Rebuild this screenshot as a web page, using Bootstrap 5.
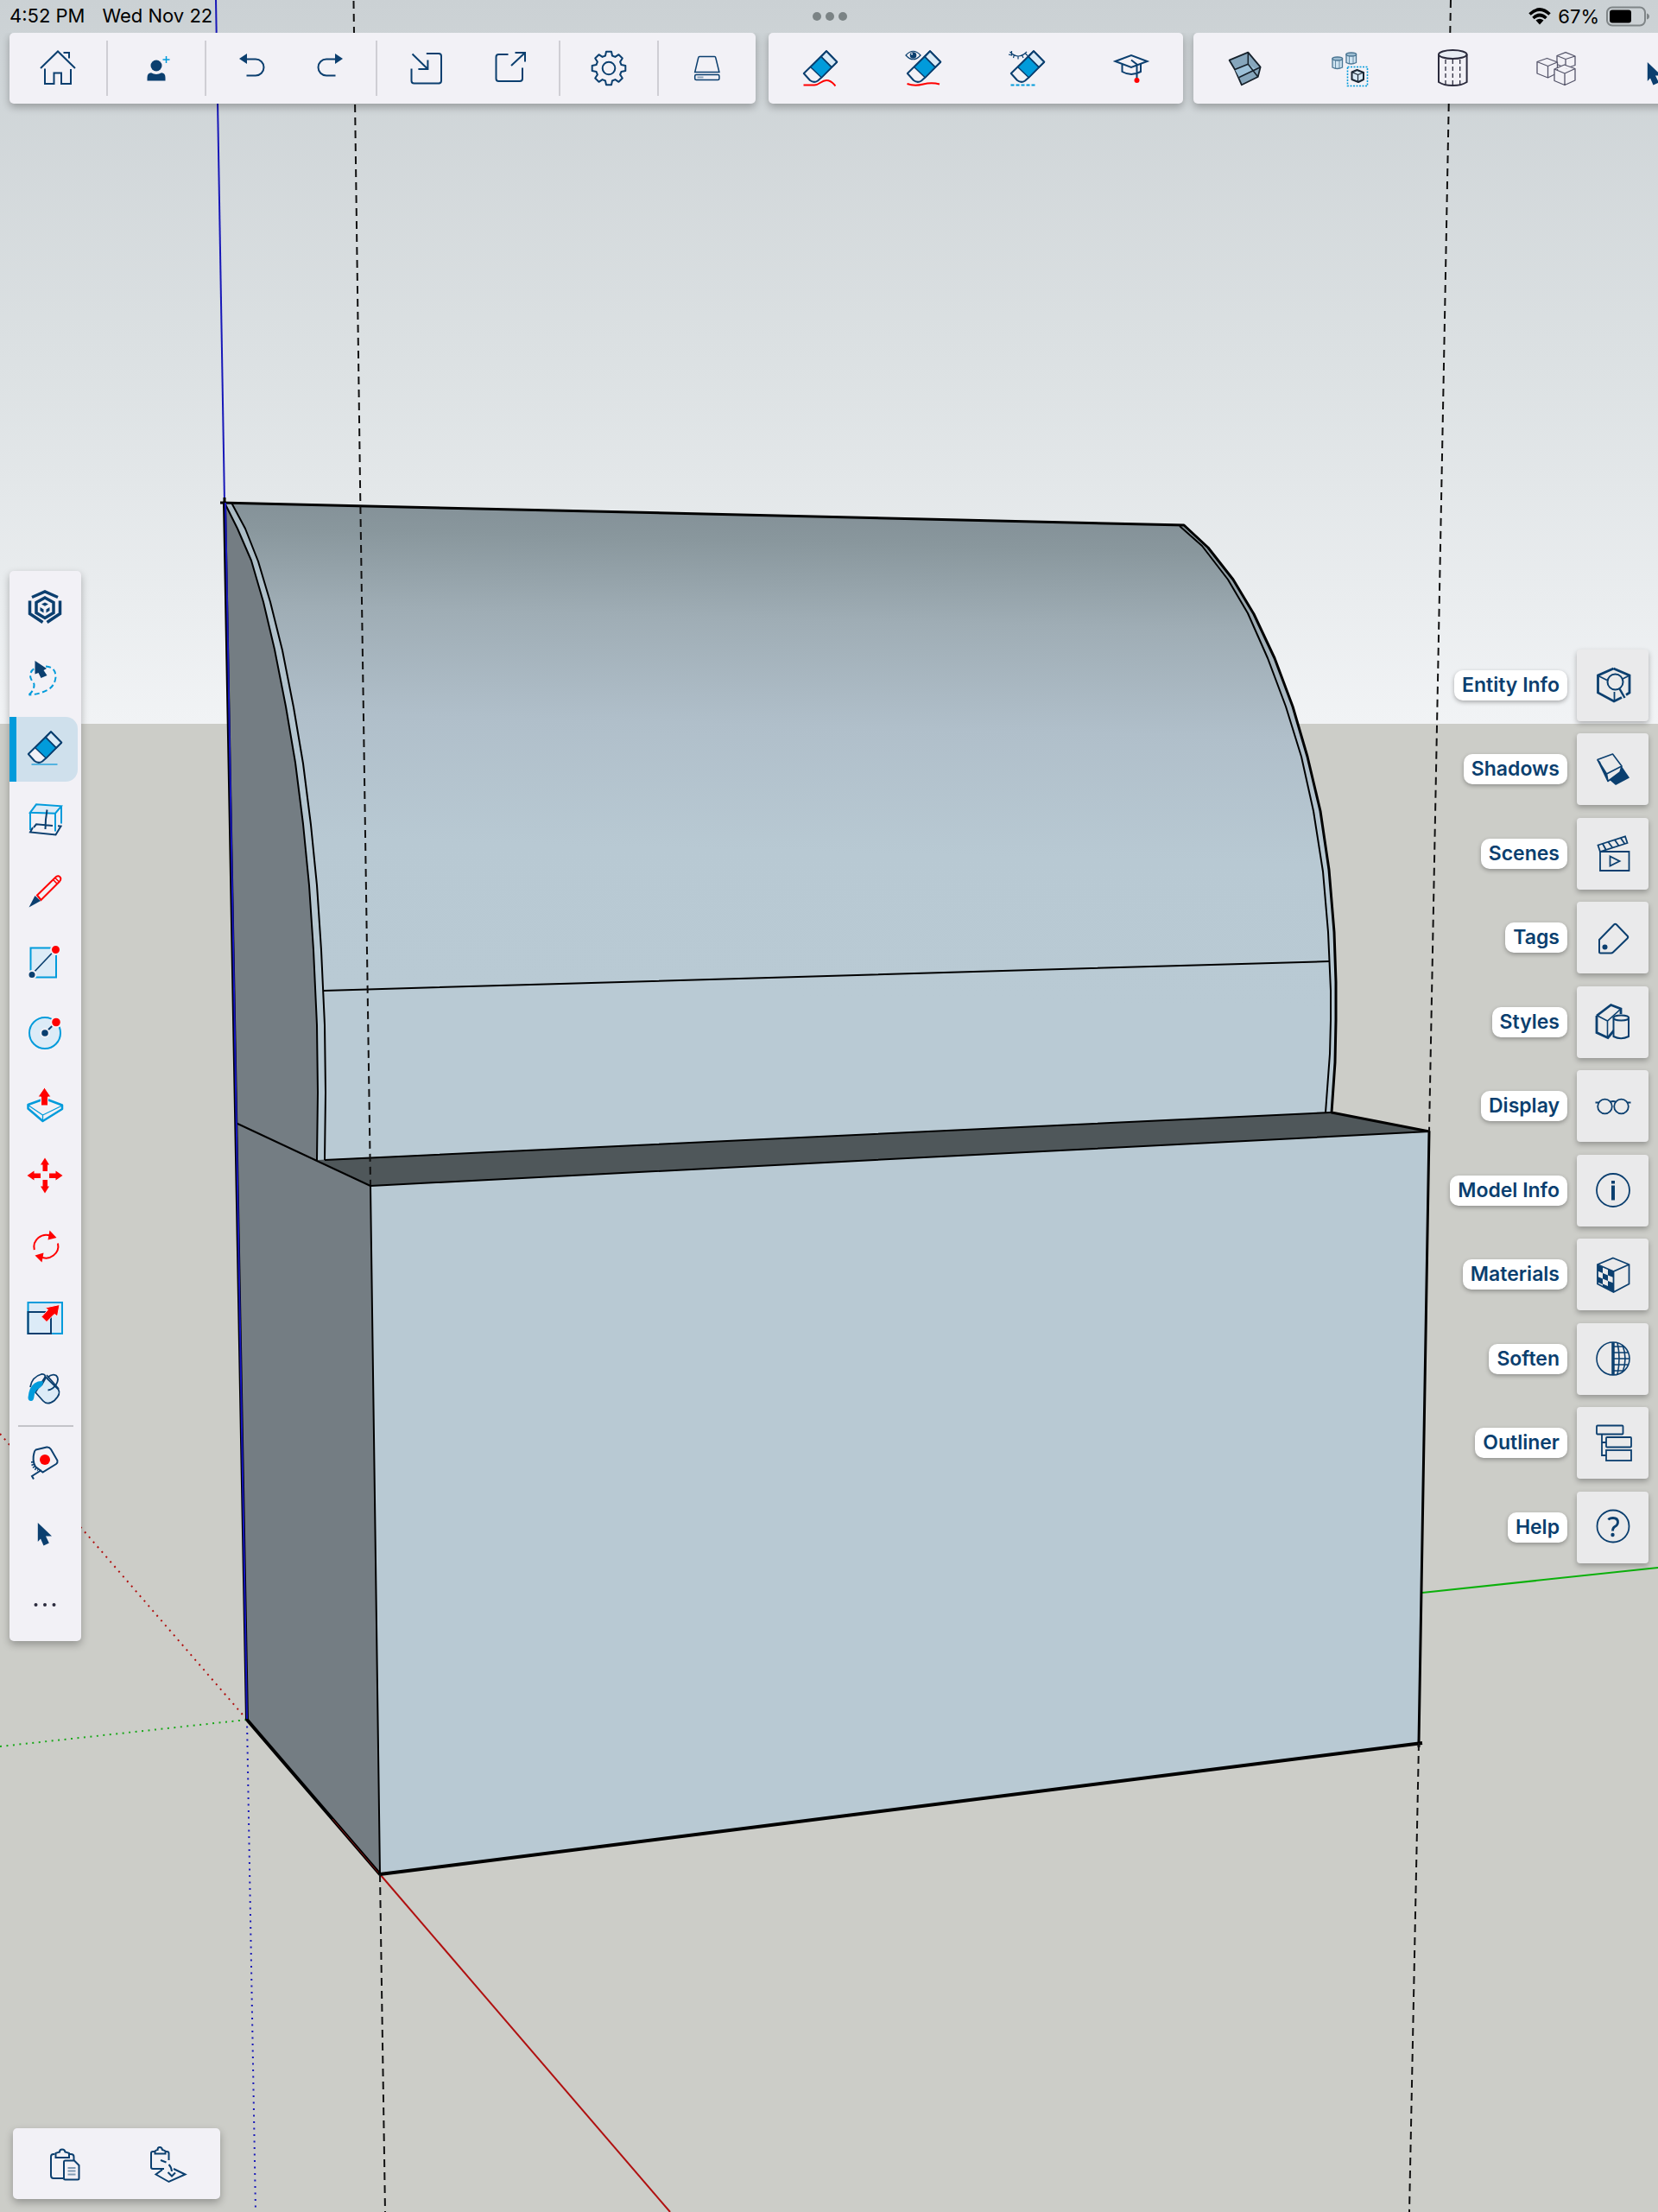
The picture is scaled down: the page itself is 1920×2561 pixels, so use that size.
<!DOCTYPE html>
<html lang="en">
<head>
<meta charset="utf-8">
<meta name="viewport" content="width=device-width, initial-scale=1">
<title>SketchUp for iPad</title>
<link href="https://cdn.jsdelivr.net/npm/bootstrap@5.3.0/dist/css/bootstrap.min.css" rel="stylesheet">
<style>
:root{--navy:#0b3f6f;--sky:#019bdb;--panel:#f2f1f6}
body{font-family:Inter,"Liberation Sans",sans-serif;background:#cccdc8}
.stage{display:grid;min-height:100vh;grid-template:minmax(0,1fr)/minmax(0,1fr);overflow:hidden}
.stage>*{grid-area:1/1}
.scene-view{width:100%;height:100%;min-height:100%;display:block}
.statusbar{height:38px;padding:0 10px 0 11px;font-size:22px;line-height:36px;color:#000}
.statusbar .slot{flex:1 1 0}
.clock{gap:20px}
.dots{gap:5px}
.dots i{width:10px;height:10px;border-radius:50%;background:#7b8385}
.bars{padding:0 0 20px 11px;overflow:hidden}
.file-bar{margin-right:15px}
.erase-bar{margin-right:12px}
.panel{background:var(--panel);border-radius:5px;box-shadow:0 4px 10px rgba(0,0,0,.28)}
.tool{border:0;background:transparent;padding:0;display:flex;align-items:center;justify-content:center;flex:none;color:var(--navy)}
.tool svg,.side-btn svg{width:48px;height:48px;fill:none;stroke:currentColor;stroke-width:2;overflow:visible;flex:none}
.topbar{height:82px;flex:none}
.seg{padding:0 7px;height:64px;border-right:2px solid #cfced4}
.seg:last-child{border-right:0}
.seg .tool{width:98px;height:64px}
.seg .tool.slim{width:91px}
.w120 .tool{width:120px;height:82px}
.rail{width:83px;height:1239px;margin-left:11px;padding:4px 0}
.rail .tool{width:79px;height:75px;padding-left:3px}
.rail .tool.chosen{background:#cfe0ec;border-radius:0 14px 14px 0;border-left:8px solid var(--sky);padding-left:0;padding-right:5px}
.rail hr{width:64px;margin:-3px auto;border:0;border-top:2px solid #c4c4c9;opacity:1}
.side{height:1058px;margin-right:11px}
.side-row{gap:11px}
.side-tag{background:#fff;color:var(--navy);font-size:23px;line-height:35px;font-weight:600;padding:0 9px;border-radius:10px;box-shadow:0 2px 5px rgba(0,0,0,.3)}
.side-btn{width:83px;height:83px;border:0;border-radius:4px;background:#eaeaeb;color:var(--navy);display:flex;align-items:center;justify-content:center;box-shadow:0 3px 6px rgba(0,0,0,.28);padding:0}
.clipbar{margin:0 0 15px 15px}
</style>
<script src="https://cdn.jsdelivr.net/npm/bootstrap@5.3.0/dist/js/bootstrap.bundle.min.js"></script>
</head>
<body>
<svg width="0" height="0" class="position-absolute" aria-hidden="true">
<defs>
<g id="eraser" stroke="#0b3f6f" stroke-width="2" stroke-linejoin="round">
<path d="M31 4.300 43.200 16.700 25.500 34.500 21 38.500Q16.500 41.500 12 38L4.800 30Z" fill="#f2f1f6"/>
<path d="M31 4.300 43.200 16.700 37 22.900 24.800 10.700Z" fill="#d9eaf6"/>
<path d="M24.800 10.700 37 22.900 25.300 34.700 12.700 22.700Z" fill="#019bdb" stroke-width="1.500"/>
</g>
<path id="cursor" d="M15.800 11 32 26.500H25L28.800 34.500 22.500 37.500 19 29.500 15.800 33Z" fill="#0b3f6f" stroke="none"/>
<linearGradient id="skyFade" x1="0" y1="0" x2="0" y2="1"><stop offset="0" stop-color="#cbd1d4"/><stop offset=".5" stop-color="#dce1e3"/><stop offset="1" stop-color="#f1f3f5"/></linearGradient>
<linearGradient id="curveFade" gradientUnits="userSpaceOnUse" x1="790" y1="590" x2="776" y2="1150"><stop offset="0" stop-color="#849198"/><stop offset=".06" stop-color="#89979d"/><stop offset=".22" stop-color="#9fadb5"/><stop offset=".44" stop-color="#b0bfca"/><stop offset=".7" stop-color="#b8c9d3"/><stop offset="1" stop-color="#b9cad4"/></linearGradient>
</defs>
</svg>

<main class="stage">
<!-- 3D model viewport -->
<svg class="scene-view" viewBox="0 0 1920 2561" preserveAspectRatio="xMidYMid slice" role="img" aria-label="Model view">
<rect width="1920" height="838" fill="url(#skyFade)"/>
<rect y="838" width="1920" height="1723" fill="#cccdc8"/>
<g fill="none" stroke-width="2">
<path d="M250 0 260 582" stroke="#1818b8"/>
<path d="M286 1991 296 2561" stroke="#1818b8" stroke-dasharray="2 5.500"/>
<path d="M0 1660 286 1991" stroke="#b01010" stroke-dasharray="2 5.500"/>
<path d="M0 2022 286 1991" stroke="#18a818" stroke-dasharray="2 5.500"/>
<path d="M1647 1844 1920 1815" stroke="#0bb00b"/>
<path d="M440 2170 776 2561" stroke="#b01010"/>
</g>
<path d="M260 582 275 612 291 649 305 697 318 752 331 818 342 883 351 954 358 1025 363 1100 367 1187 368 1265 367 1343 429 1373 440 2170 286 1991Z" fill="#747d83"/>
<path d="M260 582 1371 608 1399 634 1428 671 1452 711 1476 762 1497 818 1514 876 1529 939 1539 1007 1545 1079 1547 1137 1547 1181 1546 1230 1542 1288 367 1343 368 1265 367 1187 363 1100 358 1025 351 954 342 883 331 818 318 752 305 697 291 649 275 612Z" fill="url(#curveFade)"/>
<path d="M260 582 268 582 284 612 299 650 313 697 327 753 340 819 351 884 360 955 367 1025 372 1100 376 1187 377 1265 376 1343 367 1343 368 1265 367 1187 363 1100 358 1025 351 954 342 883 331 818 318 752 305 697 291 649 275 612Z" fill="#b4c5cf" opacity=".8"/>
<path d="M367 1343 1541 1288 1655 1310 429 1373Z" fill="#4f575a"/>
<path d="M429 1373 1655 1310 1643 2018 440 2170Z" fill="#b8c9d3"/>
<g fill="none" stroke="#000" stroke-width="2" stroke-linejoin="round">
<path d="M260 582 275 612 291 649 305 697 318 752 331 818 342 883 351 954 358 1025 363 1100 367 1187 368 1265 367 1343"/>
<path d="M268 582 284 612 299 650 313 697 327 753 340 819 351 884 360 955 367 1025 372 1100 376 1187 377 1265 376 1343"/>
<path d="M1366 609 1392 632 1422 671 1445 710 1468 762 1489 818 1507 876 1521 939 1532 1009 1538 1079 1541 1147 1541 1181 1540 1220 1535 1288"/>
<path d="M375 1147 1539 1113M273 1300 429 1373 1655 1310M376 1343 1541 1288M429 1373 440 2170"/>
<path d="M255 582 1371 608 1399 634 1428 671 1452 711 1476 762 1497 818 1514 876 1529 939 1539 1007 1545 1079 1547 1137 1547 1181 1546 1230 1542 1288 1655 1310 1643 2018M260 576 260 588M1643 2014V2023" stroke-width="3"/>
<path d="M260 582 286 1991 440 2170 1647 2018" stroke-width="4"/>
</g>
<g fill="none" stroke-width="2"><path d="M261 582 286 1990" stroke="#1515c0"/><path d="M385 2106 438 2168" stroke="#8a1010" stroke-width="1"/></g>
<g fill="none" stroke="#111" stroke-width="2" stroke-dasharray="9 6">
<path d="M409.500 1 417 560 429 1372M440 2170 446 2561M1680 0 1669 580 1655 1310M1643 2018 1632 2561"/>
</g>
</svg>

<header class="align-self-start">
<div class="statusbar d-flex">
<div class="slot clock d-flex"><span>4:52 PM</span><span>Wed Nov 22</span></div>
<div class="dots d-flex align-items-center"><i></i><i></i><i></i></div>
<div class="slot d-flex justify-content-end align-items-center gap-2">
<svg width="26" height="20" viewBox="0 0 26 20" aria-label="Wi-Fi"><g fill="none" stroke="#000" stroke-width="3.600"><path d="M1.500 7.500Q13-3.500 24.500 7.500"/><path d="M5.500 12Q13 5 20.500 12"/></g><path d="M8.500 14.500Q13 11 17.500 14.500L13 19.500Z"/></svg>
<span>67%</span>
<svg width="50" height="24" viewBox="0 0 50 24" aria-label="Battery"><rect x="1" y="1.500" width="44" height="21" rx="6" fill="none" stroke="#7f8587" stroke-width="2"/><rect x="4" y="4.500" width="25" height="15" rx="3"/><path d="M47 8.500Q50 9.500 50 12T47 15.500Z" fill="#7f8587"/></svg>
</div>
</div>
<div class="bars d-flex flex-nowrap">
<nav class="panel topbar file-bar d-flex align-items-center" aria-label="File">
<div class="seg d-flex"><button class="tool" aria-label="Home"><svg><path d="M4 24 24 4.500 44 24M30.500 6H37V12.500M9 24.500V42H19.500V29.500H28V42H39V25"/></svg></button></div>
<div class="seg d-flex"><button class="tool" aria-label="Add person"><svg><circle cx="24" cy="21" r="6.500" fill="#0b3f6f" stroke="none"/><path d="M13.500 38.500V35Q13.500 29.500 18 29.300 24 32.500 30 29.300 34.500 29.500 34.500 35V38.500Z" fill="#0b3f6f" stroke="none"/><path d="M35.500 10V18M31.500 14H39.500" stroke="#019bdb" stroke-width="1.500"/></svg></button></div>
<div class="seg d-flex"><button class="tool slim" aria-label="Undo"><svg><path d="M18 13.500H28A9.500 9.500 0 0 1 28 32.500H17.500"/><path d="M9 13 18 7V19Z" fill="currentColor" stroke="none"/></svg></button><button class="tool slim" aria-label="Redo"><svg><path d="M29 13.500H19A9.500 9.500 0 0 0 19 32.500H29.500"/><path d="M38 13 29 7V19Z" fill="currentColor" stroke="none"/></svg></button></div>
<div class="seg d-flex"><button class="tool" aria-label="Import"><svg><path d="M8.500 7.500 26.400 25M15.400 25H26.400V14.500M24.800 7H39Q42 7 42 10V38.500Q42 41.500 39 41.500H10.500Q7.500 41.500 7.500 38.500V24.500"/></svg></button><button class="tool" aria-label="Export"><svg><path d="M25 21 41 6M29.500 6H41V16.500M21.500 8H10.500Q7.500 8 7.500 11V36Q7.500 39 10.500 39H35Q38 39 38 36V23.500"/></svg></button></div>
<div class="seg d-flex"><button class="tool" aria-label="Settings"><svg><path transform="translate(24 24)" stroke-linejoin="round" d="M-3-19.300H3L4-14.500 7.400-13.100 11.500-15.800 15.800-11.500 13.100-7.400 14.500-4 19.300-3V3L14.500 4 13.100 7.400 15.800 11.500 11.500 15.800 7.400 13.100 4 14.500 3 19.300H-3L-4 14.500-7.400 13.100-11.500 15.800-15.800 11.500-13.100 7.400-14.500 4-19.300 3V-3L-14.500-4-13.100-7.400-15.800-11.500-11.500-15.800-7.400-13.100-4-14.500Z"/><circle cx="24" cy="24" r="7.300"/></svg></button></div>
<div class="seg d-flex"><button class="tool" aria-label="Storage"><svg><g stroke-width="1.500"><path d="M15 10.500H32.500Q33.500 10.500 33.700 11.500L37.900 28.500H9.700L13.800 11.500Q14 10.500 15 10.500Z"/><rect x="9.700" y="31.500" width="28.200" height="6" rx="1.500"/></g><path d="M12.500 34.500H19.500" stroke="#8ea3ba"/></svg></button></div>
</nav>
<nav class="panel topbar erase-bar w120 d-flex" aria-label="Erase modes">
<button class="tool" aria-label="Erase"><svg><use href="#eraser"/><path d="M4.500 43.500H17C23 43.500 25 38 31 38 37 38 39 42 41.500 44.500" stroke="#f00"/></svg></button>
<button class="tool" aria-label="Hide"><svg><use href="#eraser"/><path d="M4.500 42Q13 45 23 42.500T42 42.500" stroke="#f00"/><path d="M3 9Q11.500-.5 20 9 11.500 18.500 3 9Z" stroke-width="1.200" fill="#f2f1f6"/><circle cx="11.500" cy="9" r="3.800" fill="#0b3f6f" stroke="none"/><circle cx="10" cy="7.500" r="1" fill="#fff" stroke="none"/></svg></button>
<button class="tool" aria-label="Soften edges"><svg><use href="#eraser"/><path d="M3.500 5Q13 15 23 5M5.500 4V9L2 8M8.500 8.500 7.500 12M13 10V13.500M17.500 9 19 12M21 6.500 24 9.500" stroke-width="1.200"/><path d="M4.500 43.500H33" stroke="#019bdb" stroke-dasharray="4 2"/></svg></button>
<button class="tool" aria-label="Learn"><svg><path d="M5.500 16 24 9 42.500 16 24 23ZM13.500 19.500V28Q24 34 35 28V19.500M24 14.500 30.500 19.500V36"/><circle cx="30.500" cy="38" r="3" fill="#f00" stroke="none"/></svg></button>
</nav>
<nav class="panel topbar w120 d-flex" aria-label="Model">
<button class="tool" aria-label="Face style"><svg><g stroke="#16212b" stroke-linejoin="round"><path d="M5.600 14.700 27.300 5.700 41.600 22.700 38.700 34 19.900 43.300 12 25.500Z" fill="#86a6bc" stroke-width="1.800"/><path d="M12 25.500 27.300 19.300 36 24.500 17 34.500Z" fill="#9cc0d8" stroke="none"/><path d="M27.300 5.700V19.300L38.700 34M12 25.500 27.300 19.300M17 34.500 41.600 22.700" stroke-width="1.500"/></g></svg></button>
<button class="tool" aria-label="Similar components"><svg><g stroke="#4b7593" stroke-width="1.300" fill="#cfe3f1"><path d="M5 13V23Q10.500 26 16.500 23V13Z"/><ellipse cx="10.800" cy="13" rx="5.800" ry="2" fill="#9dbdd2"/><path d="M8.500 15V24M13 15V24" stroke-width=".8"/><path d="M21 8V17.500Q26.500 20.500 32.500 17.500V8Z"/><ellipse cx="26.800" cy="8" rx="5.800" ry="2" fill="#9dbdd2"/><path d="M24.500 10V19M29 10V19" stroke-width=".8"/></g><rect x="22.500" y="22.500" width="23" height="22" stroke="#019bdb" stroke-width="1.600" stroke-dasharray="2 1.500"/><g stroke="#1b2734" stroke-linejoin="round"><path d="M33.500 26 41 29V37L35 40 27.500 37V28.500Z" fill="#d9eaf6"/><path d="M27.500 28.500 34.500 31.500 41 29M34.500 31.500V40" stroke-width="1.200"/></g></svg></button>
<button class="tool" aria-label="Hidden geometry"><svg><g stroke="#2b2b3d"><ellipse cx="24.300" cy="8" rx="16.300" ry="5" fill="#e8edf3"/><path d="M8 8V40Q14 44 24.300 44T40.600 40V8"/><path d="M16 14V43M24.300 14V43M32.700 14V43" stroke-width="1.300" stroke-dasharray="5 3"/></g></svg></button>
<button class="tool" aria-label="Components"><svg><g stroke="#55556a" stroke-width="1.300" fill="#f2f1f6" stroke-linejoin="round"><path d="M35 5.700 46 10V20.500L36 24 25 19.500V9.500ZM25 9.500 35 13.500 46 10M35 13.500V24"/><path d="M13.500 12.500 25.500 17V29.500L14.500 35 2 30V16.500ZM2 16.500 14.500 21.500 25.500 17M14.500 21.500V35"/><path d="M33.500 20 46 24.500V38L34 43.500 22 38.500V25ZM22 25 34 30 46 24.500M34 30V43.500"/></g></svg></button>
<button class="tool" aria-label="Select"><svg><use href="#cursor" x="-6" y="6"/></svg></button>
</nav>
</div>
</header>

<nav class="panel rail align-self-center d-flex flex-column justify-content-between" aria-label="Tools">
<button class="tool" aria-label="SketchUp"><svg><g stroke-width="3.500"><path d="M9 12.500 24 6 39 12.500M6.500 16.500V31.500L21.500 41.500M41.500 16.500V31.500L26.500 41.500"/><path d="M24 13 34 18.500V30.500L24 36.500 14 30.500V18.500Z"/></g><path d="M24 18.500 28 20.500 24 22.800 20 20.500ZM18.500 24 22.500 26.500V30.500L18.500 28ZM29.500 24 25.500 26.500V30.500L29.500 28Z" fill="#0b3f6f" stroke="none"/></svg></button>
<button class="tool" aria-label="Lasso select"><svg><path d="M5.500 43.500Q12 38 11.500 31 7 25 7 21 8 12 17 12M25 10.500Q36.500 11 36.500 23 35.500 33 27 38 17 43 5.500 43.500" stroke="#019bdb" stroke-dasharray="6 3.500"/><path d="M12.500 4 26 13 22.500 15 26.500 21 19.500 24 16.500 18 12.500 19.500Z" fill="#0b3f6f" stroke="none"/></svg></button>
<button class="tool chosen" aria-label="Eraser" aria-pressed="true"><svg><use href="#eraser"/><path d="M8.500 42H38.500" stroke="#2aa5dd" stroke-width="1.500"/></svg></button>
<button class="tool" aria-label="Section"><svg><g stroke="#019bdb"><path d="M7 15.700 14 6.300 43 8.300 36 16.700Z" fill="#dcebf7"/><path d="M7 15.700V36M36 16.700V37.500M43 8.300V28.500"/></g><path d="M10 33 7 38.500 36.500 41.500 42.500 31.500 39 31.200M33 31 14 29.300 11 33M26.500 12.500Q24.500 24 24.500 35"/></svg></button>
<button class="tool" aria-label="Pencil"><svg><g stroke="#f00" fill="#f2f1f6"><path d="M15 28.500 37 7Q40 5 42 8 43 10 41 12.500L19.500 34Z"/><path d="M33.500 10.500 38 15M36 8.500 40 12.500" stroke-width="1.500"/></g><path d="M5.500 42.500 12.500 29 19 35Z" fill="#0b3f6f" stroke="none"/></svg></button>
<button class="tool" aria-label="Rectangle"><svg><rect x="7.500" y="7.500" width="29.500" height="34" fill="#dcebf7" stroke="#019bdb"/><path d="M9 38 36 9.500" stroke-width="1.700"/><circle cx="9" cy="38.500" r="4.500" fill="#0b3f6f" stroke="#f2f1f6"/><circle cx="36.500" cy="9.500" r="5.500" fill="#f00" stroke="#f2f1f6"/></svg></button>
<button class="tool" aria-label="Circle"><svg><circle cx="24" cy="24" r="18" fill="#dcebf7" stroke="#019bdb"/><path d="M24 24 37 11.500"/><circle cx="24" cy="24" r="4.800" fill="#0b3f6f" stroke="#f2f1f6"/><circle cx="37" cy="11.500" r="5.800" fill="#f00" stroke="#f2f1f6"/></svg></button>
<button class="tool" aria-label="Push pull"><svg><g stroke="#019bdb" stroke-linejoin="round"><path d="M4.500 24 24 17 44 24.500V29L21.500 43 4.500 28.500Z" fill="#f2f1f6" stroke-width="2.500"/><path d="M4.500 24.500 21.500 36 44 25M21.500 36V43" stroke-width="1.300"/></g><path d="M23.500 4 31 15H27.500V25H19.500V15H16Z" fill="#f00" stroke="#f2f1f6" stroke-width="1"/></svg></button>
<button class="tool" aria-label="Move"><svg><path d="M24 3.500 29 11.500H27V19H21.500V11.500H19ZM24 44.500 29 36.500H27V29H21.500V36.500H19ZM3.500 24 11.500 18.500V21.500H19V27H11.500V29.500ZM44.500 24 36.500 18.500V21.500H29V27H36.500V29.500Z" fill="#f00" stroke="none"/></svg></button>
<button class="tool" aria-label="Rotate"><svg><path d="M11.800 28A14 14 0 0 1 31 12M39 20.500A14 14 0 0 1 19 36" stroke="#f00"/><path d="M29.500 5.500 37.500 14 27.500 16.500ZM20.500 42.500 12.500 34.500 22.500 31.500Z" fill="#f00" stroke="none"/></svg></button>
<button class="tool" aria-label="Scale"><svg><rect x="4.500" y="6" width="39.500" height="36" fill="#dcebf7" stroke="#019bdb"/><rect x="4.500" y="17" width="26.500" height="25"/><path d="M41 8.500 38.500 22 35 19.500 26 28.500 20 22.500 27.500 14.500 24.500 12Z" fill="#f00" stroke="#f2f1f6" stroke-width="1"/></svg></button>
<button class="tool" aria-label="Paint"><svg><path d="M13 28 24.500 10 39.500 24.500Q43 30 35 37.500 27 43.500 22 38Z" fill="#dcebf7" stroke-width="1.800"/><path d="M7 22Q9 10 20 7 26 6.500 24 13L20 20M26 8 40 24M27 11Q32 6 37 8.500 41 12 37 19 33 25 27.500 25.500" stroke-width="1.800"/><path d="M4.500 34Q5.500 22 12 17.500 18 14 22 15.500 22 21 15.500 24.500 12 27 11.500 33 11 38 8 38 4.500 38 4.500 34Z" fill="#019bdb" stroke="none"/></svg></button>
<hr>
<button class="tool" aria-label="Tape measure"><svg><path d="M13.500 8.500 26 5.500Q29 5 31 8L38.500 21Q39 23.500 37 25L21.500 34.500 13 28Q9 21 11.500 12Q12 9.500 13.500 8.500ZM20 32 9 39 11 42.500"/><path d="M9.500 22Q9 29 16 32" stroke-dasharray="1.500 1.500" stroke-width="3"/><circle cx="24" cy="20" r="6" fill="#f00" stroke="none"/></svg></button>
<button class="tool" aria-label="Select"><svg><use href="#cursor"/></svg></button>
<button class="tool" aria-label="More tools"><svg><g fill="#2b2b3d" stroke="none"><circle cx="13.500" cy="24" r="2"/><circle cx="24" cy="24" r="2"/><circle cx="34.500" cy="24" r="2"/></g></svg></button>
</nav>

<aside class="side align-self-center ms-auto d-flex flex-column justify-content-between align-items-end" aria-label="Panels">
<div class="side-row d-flex align-items-center"><label class="side-tag" for="p1">Entity Info</label><button id="p1" class="side-btn"><svg><path d="M24.500 5 43 13V33L39 35.500M34 38.500 25 43 6.500 33V13L24.500 5" stroke-width="2.800"/><path d="M7 13.500 17 18.500M42 13.500 34 17.500M25.500 42V32" stroke-width="1.800"/><circle cx="26.500" cy="20.500" r="9"/><path d="M31.500 28.500 37.500 39" stroke-width="2.500"/></svg></button></div>
<div class="side-row d-flex align-items-center"><label class="side-tag" for="p2">Shadows</label><button id="p2" class="side-btn"><svg><path d="M20 36 34.500 21 43 33.500 27 42Z" fill="#0b3f6f" stroke="none"/><g stroke-width="1.600" stroke-linejoin="round" fill="#eaeaeb"><path d="M6 12.500 23.500 6 34 20 32 27 18 37.500Z"/><path d="M6 12.500 16.500 29 34 20M16.500 29 18 37.500M8 14.500 18 36"/></g></svg></button></div>
<div class="side-row d-flex align-items-center"><label class="side-tag" for="p3">Scenes</label><button id="p3" class="side-btn"><svg><g stroke-width="1.800"><path d="M6.500 14.500 38 4.500 40.500 12 9 22ZM12 13 15.500 19.500M18.500 11 23 17M26 8.500 30.500 15M33 6.500 37.500 13"/><path d="M9 22H42.500V44H9ZM20.500 27.500V38.500L31.500 33Z"/></g></svg></button></div>
<div class="side-row d-flex align-items-center"><label class="side-tag" for="p4">Tags</label><button id="p4" class="side-btn"><svg><path d="M8 26 25 8.500Q26.500 7 28 8.500L40.500 21.500Q42 23 40.500 24.500L24 40.500Q23 41.500 21.500 41.500H9.500Q8 41.500 8 40Z"/><circle cx="14.500" cy="34.500" r="3" fill="#0b3f6f" stroke="none"/></svg></button></div>
<div class="side-row d-flex align-items-center"><label class="side-tag" for="p5">Styles</label><button id="p5" class="side-btn"><svg><path d="M5 17 21.500 4.500 33 9V15M5 17V36.500L18 42.500 25 34" stroke-width="2.800"/><path d="M5 16.500 17.500 23 33 9M17.500 23V42" stroke-width="1.600"/><path d="M24.500 19.500V41Q33 45.500 42 41V19.500Z" fill="#eaeaeb"/><ellipse cx="33.300" cy="19.500" rx="8.800" ry="3" fill="#eaeaeb"/></svg></button></div>
<div class="side-row d-flex align-items-center"><label class="side-tag" for="p6">Display</label><button id="p6" class="side-btn"><svg><g stroke-width="1.800"><circle cx="14.500" cy="24" r="8.300"/><circle cx="33.500" cy="24" r="8.300"/><path d="M3.500 19.500H7.500M40.500 19.500H44.500M20.500 19Q24 17 27.500 19"/></g></svg></button></div>
<div class="side-row d-flex align-items-center"><label class="side-tag" for="p7">Model Info</label><button id="p7" class="side-btn"><svg><circle cx="24" cy="24" r="19" stroke-width="1.800"/><path d="M24 18.500V35.500M24 13V16.500" stroke-width="4"/></svg></button></div>
<div class="side-row d-flex align-items-center"><label class="side-tag" for="p8">Materials</label><button id="p8" class="side-btn"><svg><path d="M6 12.500 12 15V22L6 19.500ZM12 22 18 24.500V31L12 28.500ZM18 17.500 24.500 20V27L18 24.500ZM6 26 12 28.500V35L6 32.500ZM18 31 24.500 33.500V43.500L18 40ZM12 34.500 18 37V40.500L12 37.500Z" fill="#0b3f6f" stroke="none"/><path d="M24 4.500 42.500 12V34.500L24.500 44 6 34.500V12ZM6 12 24.500 20 42.500 12M24.500 20V44" stroke-width="1.800"/></svg></button></div>
<div class="side-row d-flex align-items-center"><label class="side-tag" for="p9">Soften</label><button id="p9" class="side-btn"><svg><g stroke-width="1.600"><circle cx="24" cy="24" r="19"/><path d="M25 10H37M25 17H42M25 24H43M25 31H42M25 38H37M29 5.500Q33 24 29 42.500M35 8.500Q41 24 35 39.500"/></g><path d="M24 5V43" stroke-width="3.500"/></svg></button></div>
<div class="side-row d-flex align-items-center"><label class="side-tag" for="p10">Outliner</label><button id="p10" class="side-btn"><svg><g stroke-width="1.800"><rect x="5" y="3.500" width="30.500" height="10" rx="1"/><rect x="16" y="17" width="29" height="11.500" rx="1"/><rect x="16" y="32" width="29" height="12"/><path d="M11 13.500V38H16M11 23H16"/></g></svg></button></div>
<div class="side-row d-flex align-items-center"><label class="side-tag" for="p11">Help</label><button id="p11" class="side-btn"><svg><circle cx="24" cy="23" r="18.500" stroke-width="1.800"/><path d="M18.500 15.500Q20 13.500 24 13.500 29.500 13.500 29.500 18.500 29.500 21.500 26 23.500 23.500 25 23.500 28.500" stroke-width="2.800"/><circle cx="23.500" cy="33" r="2.200" fill="#0b3f6f" stroke="none"/></svg></button></div>
</aside>

<nav class="panel clipbar topbar w120 d-flex align-self-end me-auto" aria-label="Clipboard">
<button class="tool" aria-label="Paste"><svg><path d="M12.500 13H11Q8 13 8 16V37.500Q8 41 11 41H22M28.500 13H31Q34.500 13 34.500 16V20"/><path d="M13.500 17V12Q16 11 18 10.500 18 7.500 21 7.500T24.500 10.500Q27 11 29 12V17Z"/><path d="M24.500 20.500H35L40.500 26V41Q40.500 42.500 39 42.500H24.500Q23 42.500 23 41V22Q23 20.500 24.500 20.500Z"/><path d="M27.500 29H36.500M27.500 32.500H36.500M27.500 36.500H36.500" stroke="#7f9ab3" stroke-width="1.800"/></svg></button>
<button class="tool" aria-label="Paste in place"><svg><path d="M8 10H6Q4 10 4 12V28Q4 30 6 30H19M21 10H22Q24.500 10 24.500 12V20M8.500 12.500V9.500Q10.500 8 11.500 8 11.500 5 14 5T17 8Q19 8.500 20.500 9.500V12.500ZM17 31 9.500 36.500 24.500 45 43.500 36.500 30 30M15 20 21.500 22.500M24.500 25Q27.500 28 28 33M23.500 34 28 38.500 32 34.500"/></svg></button>
</nav>
</main>
</body>
</html>
